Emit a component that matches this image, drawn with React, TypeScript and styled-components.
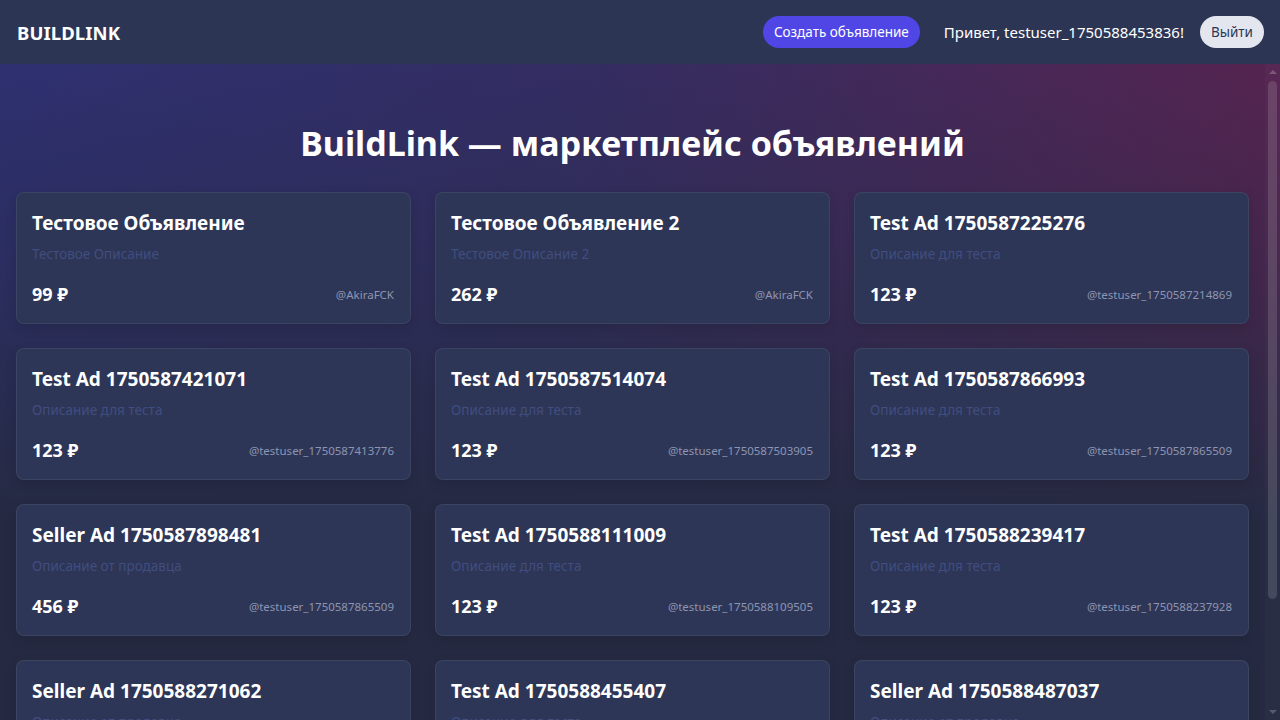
import React from 'react';
import styled, { createGlobalStyle } from 'styled-components';

const GlobalStyle = createGlobalStyle`
  html, body {
    margin: 0;
    padding: 0;
    height: 100%;
    overflow: hidden;
  }
  body {
    font-family: "Noto Sans", "Open Sans", sans-serif;
    background: #252a42;
    color: #ffffff;
  }
  * {
    box-sizing: border-box;
  }
`;

const Shell = styled.div`
  height: 100vh;
  display: flex;
  flex-direction: column;
`;

// верхняя панель
const Header = styled.header`
  height: 64px;
  flex-shrink: 0;
  display: flex;
  align-items: center;
  justify-content: space-between;
  padding: 0 16px;
  background: #2c3654;
`;

const Logo = styled.div`
  font-size: 18.5px;
  font-weight: 700;
  letter-spacing: 0.1px;
  color: #ffffff;
  margin-left: 1px;
`;

const HeaderRight = styled.div`
  display: flex;
  align-items: center;
  gap: 24px;
`;

const PillButton = styled.button<{ $variant: 'primary' | 'light' }>`
  height: 32px;
  padding: 0 11px;
  border: none;
  border-radius: 16px;
  font-family: inherit;
  font-size: 13.5px;
  cursor: pointer;
  background: ${p => (p.$variant === 'primary' ? '#4f46e5' : '#e3e6ee')};
  color: ${p => (p.$variant === 'primary' ? '#ffffff' : '#2c3654')};
`;

const Greeting = styled.span`
  font-size: 15px;
  color: #ffffff;
  margin-right: -8px;
`;

// область под шапкой: контент + полоса прокрутки
const Body = styled.div`
  flex: 1;
  min-height: 0;
  display: flex;
  background:
    linear-gradient(180deg, rgba(37, 42, 66, 0) 0%, rgba(37, 42, 66, 0.35) 30%, #252a42 70%),
    linear-gradient(90deg, #2e3070 0%, #332d62 45%, #552450 100%);
`;

const Main = styled.main`
  flex: 1;
  min-width: 0;
  overflow-y: auto;
  scrollbar-width: none;
  padding: 40px 16px 32px;
`;

const ScrollRail = styled.div`
  width: 15px;
  flex-shrink: 0;
  display: flex;
  flex-direction: column;
  align-items: center;
  background: rgba(255, 255, 255, 0.02);
`;

const RailArrow = styled.div<{ $dir: 'up' | 'down' }>`
  width: 0;
  height: 0;
  margin: 6px 0;
  border-left: 4px solid transparent;
  border-right: 4px solid transparent;
  ${p =>
    p.$dir === 'up'
      ? 'border-bottom: 4px solid rgba(255, 255, 255, 0.22);'
      : 'border-top: 4px solid rgba(255, 255, 255, 0.22);'}
`;

const RailTrack = styled.div`
  flex: 1;
  width: 100%;
  display: flex;
  justify-content: center;
  padding: 1px 0;
`;

const RailThumb = styled.div`
  width: 9px;
  height: 518px;
  border-radius: 5px;
  background: rgba(255, 255, 255, 0.13);
`;

const PageTitle = styled.h1`
  margin: 20px 0 30px;
  text-align: center;
  font-size: 34px;
  line-height: 38px;
  font-weight: 700;
  color: #ffffff;
`;

const Grid = styled.div`
  display: grid;
  grid-template-columns: repeat(3, 1fr);
  gap: 24px;
`;

const Card = styled.div`
  background: #2d3656;
  border: 1px solid rgba(255, 255, 255, 0.07);
  border-radius: 8px;
  padding: 16px 16px 16px 15px;
  box-shadow: 0 4px 12px rgba(0, 0, 0, 0.12);
`;

const CardTitle = styled.div`
  font-size: 19px;
  line-height: 28px;
  font-weight: 700;
  color: #ffffff;
  margin-bottom: 8px;
`;

const CardDesc = styled.div`
  font-size: 13.5px;
  line-height: 18px;
  color: #414d80;
  margin-bottom: 18px;
`;

const CardFooter = styled.div`
  display: flex;
  align-items: center;
  justify-content: space-between;
  height: 26px;
`;

const Price = styled.span`
  font-size: 18px;
  font-weight: 700;
  color: #ffffff;
`;

const Author = styled.span`
  font-size: 11.5px;
  color: #8d95b2;
`;

type Ad = { title: string; desc: string; price: number; author: string };

const ads: Ad[] = [
  { title: 'Тестовое Объявление', desc: 'Тестовое Описание', price: 99, author: 'AkiraFCK' },
  { title: 'Тестовое Объявление 2', desc: 'Тестовое Описание 2', price: 262, author: 'AkiraFCK' },
  { title: 'Test Ad 1750587225276', desc: 'Описание для теста', price: 123, author: 'testuser_1750587214869' },
  { title: 'Test Ad 1750587421071', desc: 'Описание для теста', price: 123, author: 'testuser_1750587413776' },
  { title: 'Test Ad 1750587514074', desc: 'Описание для теста', price: 123, author: 'testuser_1750587503905' },
  { title: 'Test Ad 1750587866993', desc: 'Описание для теста', price: 123, author: 'testuser_1750587865509' },
  { title: 'Seller Ad 1750587898481', desc: 'Описание от продавца', price: 456, author: 'testuser_1750587865509' },
  { title: 'Test Ad 1750588111009', desc: 'Описание для теста', price: 123, author: 'testuser_1750588109505' },
  { title: 'Test Ad 1750588239417', desc: 'Описание для теста', price: 123, author: 'testuser_1750588237928' },
  { title: 'Seller Ad 1750588271062', desc: 'Описание от продавца', price: 456, author: 'testuser_1750588237928' },
  { title: 'Test Ad 1750588455407', desc: 'Описание для теста', price: 123, author: 'testuser_1750588453836' },
  { title: 'Seller Ad 1750588487037', desc: 'Описание от продавца', price: 456, author: 'testuser_1750588453836' },
];

export default function App() {
  return (
    <Shell>
      <GlobalStyle />
      <Header>
        <Logo>BUILDLINK</Logo>
        <HeaderRight>
          <PillButton $variant="primary">Создать объявление</PillButton>
          <Greeting>Привет, testuser_1750588453836!</Greeting>
          <PillButton $variant="light">Выйти</PillButton>
        </HeaderRight>
      </Header>
      <Body>
        <Main>
          <PageTitle>BuildLink — маркетплейс объявлений</PageTitle>
          <Grid>
            {ads.map((ad, i) => (
              <Card key={i}>
                <CardTitle>{ad.title}</CardTitle>
                <CardDesc>{ad.desc}</CardDesc>
                <CardFooter>
                  <Price>{ad.price} ₽</Price>
                  <Author>@{ad.author}</Author>
                </CardFooter>
              </Card>
            ))}
          </Grid>
        </Main>
        <ScrollRail>
          <RailArrow $dir="up" />
          <RailTrack>
            <RailThumb />
          </RailTrack>
          <RailArrow $dir="down" />
        </ScrollRail>
      </Body>
    </Shell>
  );
}
